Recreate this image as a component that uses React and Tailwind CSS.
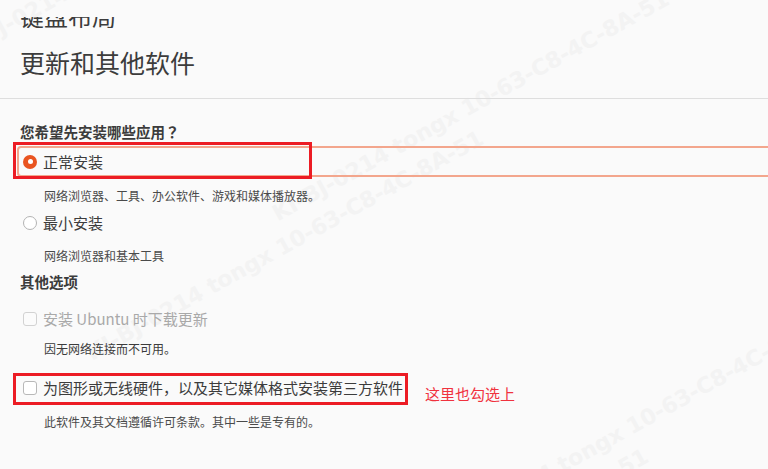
import React from 'react';

const WM = 'KI-BJ-0214  tongx  10-63-C8-4C-8A-51';

function WatermarkPair() {
  return (
    <>
      <div className="whitespace-nowrap">{WM}</div>
      <div className="ml-[-230px] mt-[6px] whitespace-nowrap">{WM}</div>
    </>
  );
}

function Watermarks() {
  const base =
    "pointer-events-none absolute origin-[0_0] -rotate-[29deg] font-['DejaVu_Sans',sans-serif] text-[22px] leading-[26px] font-bold text-[#f3f3f3]";
  return (
    <>
      <div className={`${base} left-[268px] top-[204px]`}>
        <WatermarkPair />
      </div>
      <div className={`${base} left-[433px] top-[522px]`}>
        <WatermarkPair />
      </div>
      <div className={`${base} left-[133px] top-[-96px]`}>
        <WatermarkPair />
      </div>
    </>
  );
}

function Radio({ checked }) {
  return checked ? (
    <span className="flex h-[14px] w-[14px] items-center justify-center rounded-full bg-[#e95420]">
      <span className="h-[5px] w-[5px] rounded-full bg-white" />
    </span>
  ) : (
    <span className="h-[14px] w-[14px] rounded-full border border-[#b3b3b3] bg-white" />
  );
}

function Checkbox({ disabled }) {
  return (
    <span
      className={
        disabled
          ? 'h-[14px] w-[14px] rounded-[3px] border border-[#d2d2d2] bg-[#fbfbfb]'
          : 'h-[14px] w-[14px] rounded-[3px] border border-[#b8b8b8] bg-white'
      }
    />
  );
}

export default function App() {
  return (
    <div className="relative h-[469px] w-[768px] overflow-hidden bg-[#fafafa] font-['Noto_Sans_CJK_SC','Noto_Sans',sans-serif] text-[#3c3c3c]">
      <Watermarks />

      <div className="relative">
        {/* previous page title, scrolled off */}
        <div className="mt-[17px] h-[11px] overflow-hidden pl-5">
          <div className="-mt-[13px] text-[24px] leading-[24px]">键盘布局</div>
        </div>

        <h1 className="mt-[18px] h-8 pl-5 text-[25px] leading-8 font-normal">更新和其他软件</h1>
        <div className="mt-5 border-t border-[#dedede]" />

        <div className="mt-[23px] h-5 pl-5 text-[14.5px] leading-5 font-bold">
          您希望先安装哪些应用<span className="font-['Noto_Sans_CJK_JP',sans-serif]">？</span>
        </div>

        <div className="relative mt-1 h-[31px]">
          <div className="absolute inset-y-0 left-[17px] -right-2 rounded-[4px] border-2 border-[#f3a68d]" />
          <div className="relative flex h-full items-center pl-[23px]">
            <Radio checked />
            <span className="ml-[6px] text-[15px] leading-5">正常安装</span>
          </div>
          <div className="absolute left-[13px] top-[-4px] h-[37px] w-[299px] border-[3px] border-[#ec1c24]" />
        </div>
        <div className="mt-[10px] h-[18px] pl-[44px] text-[12px] leading-[18px] text-[#4a4a4a]">
          网络浏览器、工具、办公软件、游戏和媒体播放器。
        </div>

        <div className="mt-2 flex h-5 items-center pl-[23px]">
          <Radio />
          <span className="ml-[6px] text-[15px] leading-5">最小安装</span>
        </div>
        <div className="mt-[14px] h-[18px] pl-[44px] text-[12px] leading-[18px] text-[#4a4a4a]">网络浏览器和基本工具</div>

        <div className="mt-[7px] h-5 pl-5 text-[14.5px] leading-5 font-bold">其他选项</div>

        <div className="mt-[17px] flex h-5 items-center pl-[23px]">
          <Checkbox disabled />
          <span className="ml-[6px] text-[15px] leading-5 text-[#a9a9a9]">安装 Ubuntu 时下载更新</span>
        </div>
        <div className="mt-[11px] h-[18px] pl-[44px] text-[12px] leading-[18px] text-[#3c3c3c]">因无网络连接而不可用。</div>

        <div className="relative mt-5 flex h-5 items-center pl-[23px]">
          <Checkbox />
          <span className="ml-[6px] text-[15px] leading-5">为图形或无线硬件，以及其它媒体格式安装第三方软件</span>
          <div className="absolute left-[13px] top-[-5px] h-[32px] w-[395px] border-[3px] border-[#ec1c24]" />
          <span className="absolute left-[425px] top-[6px] text-[15px] leading-5 text-[#f0323e]">这里也勾选上</span>
        </div>
        <div className="mt-[15px] h-[18px] pl-[44px] text-[12px] leading-[18px] text-[#4a4a4a]">
          此软件及其文档遵循许可条款。其中一些是专有的。
        </div>
      </div>
    </div>
  );
}
